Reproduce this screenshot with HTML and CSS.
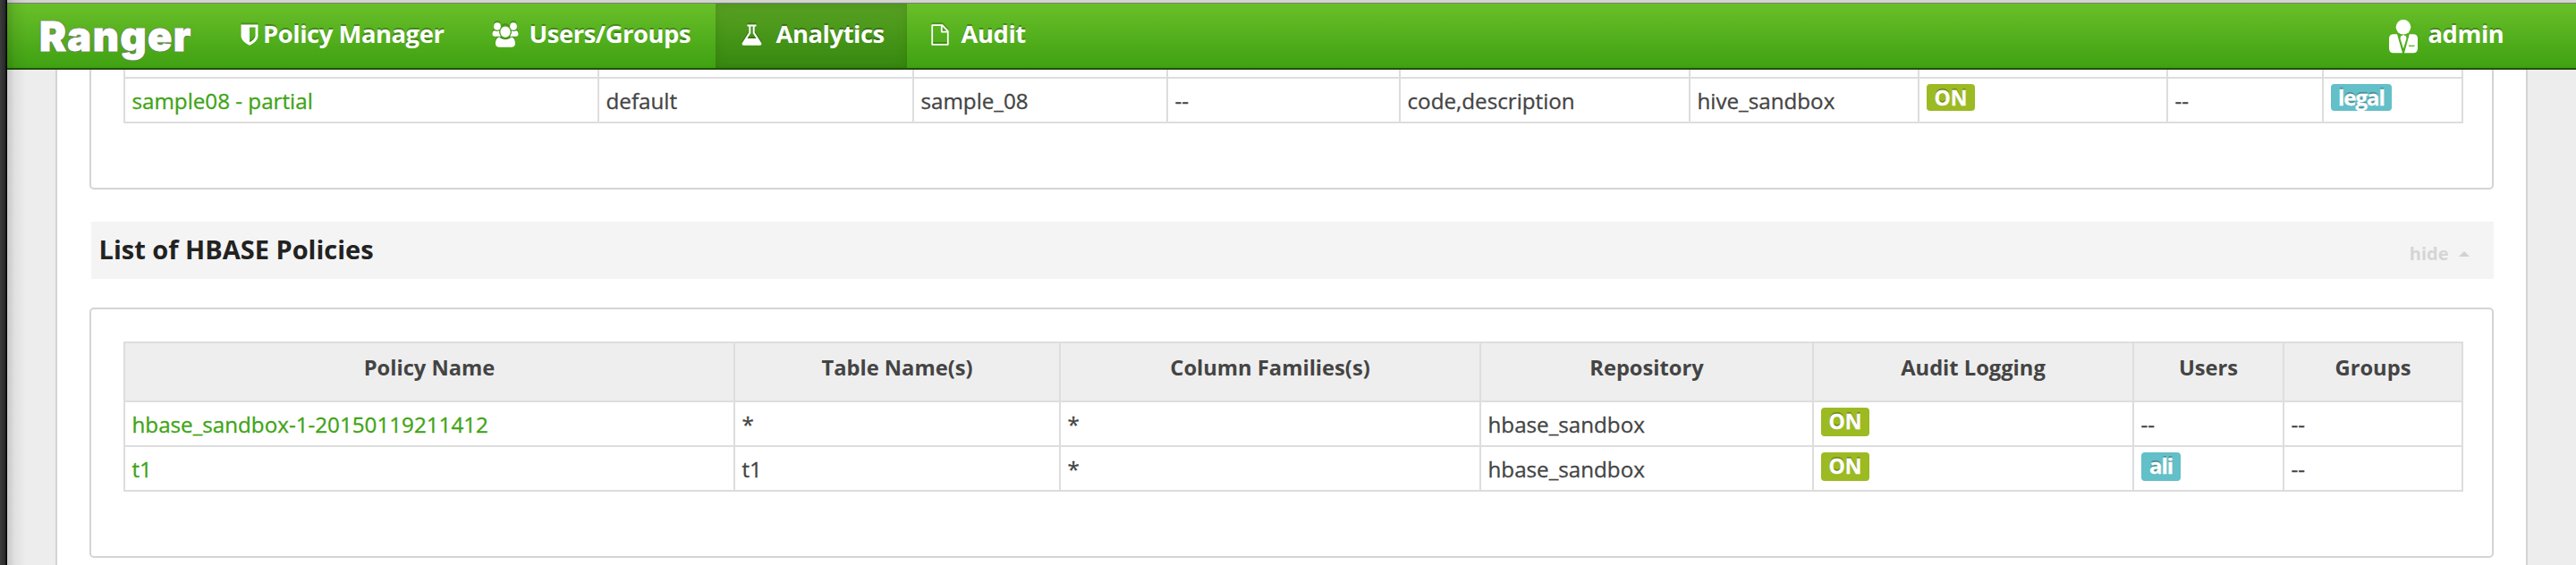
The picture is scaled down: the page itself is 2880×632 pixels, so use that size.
FILE: index.html
```html
<!DOCTYPE html>
<html lang="en">
<head>
<meta charset="utf-8">
<title>Ranger</title>
<link rel="stylesheet" href="styles.css">
</head>
<body>
<div class="screen">
  <div class="edge"></div>
  <div class="window">
    <div class="topline"></div>
    <header class="navbar">
      <a class="brand">Ranger</a>
      <nav class="nav">
        <a class="item policy">
          <svg class="icon" width="20" height="24" viewBox="0 0 20 24"><path fill="#fff" fill-rule="evenodd" d="M0.5 0.5h19v12.5c0 4.500-4.500 8.500-9.500 10.700C5 21.500.5 17.500.5 13zM10 3.500v16.800c3.800-2 6.500-4.800 6.500-7.600V3.500z"/></svg>
          <span>Policy Manager</span>
        </a>
        <a class="item users">
          <svg class="icon" width="30" height="28" viewBox="0 0 30 28"><g fill="#fff"><ellipse cx="6" cy="4.500" rx="3.900" ry="4.300"/><ellipse cx="24" cy="4.500" rx="3.900" ry="4.300"/><path d="M3 9.200c1.500.9 3.500 1 5 .3.200 2.500 1 4.700 2 6.300H3.500C1.500 15.800.5 14.800.5 13c0-1.900.8-3.800 2.500-3.800zM27 9.200c-1.500.9-3.500 1-5 .3-.2 2.500-1 4.700-2 6.300h6.500c2 0 3-1 3-2.800 0-1.900-.8-3.800-2.500-3.800z"/></g><ellipse cx="15" cy="10.600" rx="6.200" ry="6.700" fill="#fff" stroke="#4fa81c" stroke-width="1.200"/><path fill="#fff" d="M8.500 16.500c1.700 1.800 4 2.700 6.500 2.700s4.800-.9 6.500-2.700c3.200.3 4.500 3.700 4.500 7.200 0 2.700-1.700 4.100-4.500 4.100h-13C5.700 27.800 4 26.400 4 23.700c0-3.500 1.300-6.900 4.500-7.200z"/></svg>
          <span>Users/Groups</span>
        </a>
        <a class="item analytics active">
          <svg class="icon" width="23" height="24" viewBox="0 0 23 24"><path fill="#fff" fill-rule="evenodd" d="M6.500.5h10v2h-1.800v6.800l7.300 11.500c1 1.700.3 2.900-1.600 2.900H2.600C.7 23.700 0 22.500 1 20.800L8.300 9.300V2.500H6.500zM10.300 2.500v7.400L6.500 16h10L12.700 9.900V2.500z"/></svg>
          <span>Analytics</span>
        </a>
        <a class="item audit">
          <svg class="icon" width="20" height="24" viewBox="0 0 20 24"><path fill="none" stroke="#fff" stroke-width="1.800" stroke-linejoin="round" d="M1.200 1.200h11.300l6.300 6.600v15H1.200zM11.800 1.200v7.400h7"/></svg>
          <span>Audit</span>
        </a>
      </nav>
      <a class="account">
        <svg width="32" height="38" viewBox="0 0 32 38"><g fill="#fff"><circle cx="16" cy="8.300" r="8.300"/><path d="M5 16.200h4L15 37.200H5q-5 0-5-5V21.200q0-5 5-5zM27 16.200h-4.200L17 37.200h10q5 0 5-5V21.200q0-5-5-5z"/><path d="M13 18.500l3-1.500 3 1.500.5 2.500L16 32.500 12.500 21z"/></g><path stroke="#56b01f" stroke-width="1.300" d="M22 29.300h6.500"/></svg>
        <span>admin</span>
      </a>
    </header>
    <main class="content">
      <section class="panel hive">
        <table class="grid">
          <colgroup><col class="w530"><col class="w352"><col class="w284"><col class="w260"><col class="w324"><col class="w256"><col class="w278"><col class="w174"><col class="w156"></colgroup>
          <tbody>
            <tr class="cut"><td></td><td></td><td></td><td></td><td></td><td></td><td></td><td></td><td></td></tr>
            <tr><td><a class="link">sample08 - partial</a></td><td>default</td><td>sample_08</td><td>--</td><td>code,description</td><td>hive_sandbox</td><td class="tag"><span class="label on">ON</span></td><td>--</td><td class="tag"><span class="label info legal">legal</span></td></tr>
          </tbody>
        </table>
      </section>
      <div class="heading">
        <h3>List of HBASE Policies</h3>
        <a class="hide">hide <i class="caret"></i></a>
      </div>
      <section class="panel hbase">
        <table class="grid headed">
          <colgroup><col class="w682"><col class="w364"><col class="w470"><col class="w372"><col class="w358"><col class="w168"><col class="w200"></colgroup>
          <thead><tr><th>Policy Name</th><th>Table Name(s)</th><th>Column Families(s)</th><th>Repository</th><th>Audit Logging</th><th>Users</th><th>Groups</th></tr></thead>
          <tbody>
            <tr><td><a class="link">hbase_sandbox-1-20150119211412</a></td><td>*</td><td>*</td><td>hbase_sandbox</td><td class="tag"><span class="label on">ON</span></td><td>--</td><td>--</td></tr>
            <tr><td><a class="link">t1</a></td><td>t1</td><td>*</td><td>hbase_sandbox</td><td class="tag"><span class="label on">ON</span></td><td class="tag"><span class="label info ali">ali</span></td><td>--</td></tr>
          </tbody>
        </table>
      </section>
    </main>
    <div class="shade"></div>
  </div>
</div>
</body>
</html>
```
FILE: styles.css
```css
* { box-sizing: border-box; }
body { margin: 0; overflow: hidden; font-family: "Open Sans", sans-serif; font-size: 24.2px; color: #444; }
.screen { display: flex; width: 2880px; height: 632px; overflow: hidden; }
.edge { width: 8px; background: linear-gradient(90deg, #3c3c3c, #2a2a2a 70%, #000 90%); }
.window { position: relative; flex: 1; display: flex; flex-direction: column; background: #ededed; }
.shade { position: absolute; left: 0; top: 0; width: 22px; height: 100%; background: linear-gradient(90deg, rgba(0,0,0,.16), rgba(0,0,0,.05) 40%, rgba(0,0,0,0)); }
.topline { height: 4px; background: #d4d4d4; border-bottom: 1px solid #7b7f78; }

.navbar { display: flex; height: 74px; background: linear-gradient(#69bf29, #3fa112); border-bottom: 2px solid #205006; color: #fff; font-size: 27.4px; font-weight: 700; letter-spacing: -.45px; line-height: 67px; text-shadow: 0 -2px 0 rgba(0,0,0,.25); }
.brand { width: 233px; padding-left: 36px; font: 900 45px/74px Inter, sans-serif; letter-spacing: 1.5px; -webkit-text-stroke: .8px #fff; text-shadow: 1px 0 1px #777, -1px 0 1px #777, 0 1px 1px #777, 0 -1px 1px #777; }
.nav { display: flex; flex: 1; }
.item { display: flex; align-items: flex-start; white-space: nowrap; }
.icon { flex: none; margin-top: 22.5px; filter: drop-shadow(0 -2px 0 rgba(0,0,0,.2)); }
.policy { width: 281px; padding-left: 28px; gap: 5px; }
.users { width: 278px; padding-left: 27.5px; gap: 12px; }
.users .icon { margin-top: 20.5px; }
.analytics { width: 214px; padding-left: 29px; gap: 15.5px; }
.audit { padding-left: 27px; gap: 13.5px; }
.active { background: rgba(0,0,0,.15); box-shadow: inset 0 6px 16px rgba(0,0,0,.05), inset 0 0 6px rgba(0,0,0,.06); }
.account { display: flex; align-items: flex-start; gap: 11.5px; width: 209px; }
.account svg { margin-top: 17.5px; }

.content { width: 2764px; margin-left: 54px; padding: 0 36px; flex: 1; background: #fff; border: solid #d4d4d4; border-width: 0 2px; }
.panel { width: 2688px; padding: 0 32px 0 36px; border: 2px solid #d4d4d4; }
.hive { height: 134px; border-top: 0; border-radius: 0 0 5px 5px; }
.hbase { height: 280px; margin-top: 32px; padding-top: 36px; border-radius: 5px; }

.heading { display: flex; align-items: flex-start; justify-content: space-between; width: 2686px; height: 64px; margin: 36px 0 0 2px; padding: 0 27px 0 7.500px; background: #f4f4f4; }
.heading h3 { margin: 0; padding-left: 1px; font-size: 29px; font-weight: 700; line-height: 62px; color: #222; }
.hide { display: flex; align-items: flex-start; gap: 11.500px; font-size: 20px; font-weight: 700; line-height: 72px; color: #d5d5d5; }
.caret { margin-top: 33px; border: 6px solid transparent; border-top: 0; border-bottom-color: #d2d2d2; }

.grid { width: 2616px; table-layout: fixed; border-collapse: separate; border-spacing: 0; border-right: 2px solid #ddd; }
.grid td, .grid th { border: solid #ddd; border-width: 0 0 2px 2px; }
.grid td { height: 50px; padding: 1px 0 0 7.500px; line-height: 47px; vertical-align: top; white-space: nowrap; -webkit-text-stroke: .3px currentColor; }
.grid .cut td { height: 10px; padding: 0; line-height: 0; }
.grid .tag { padding: 6px 0 0 8px; line-height: 30px; }
.grid th { height: 66px; padding: 0 0 10px; background: #eee; font-size: 23.700px; line-height: 54px; font-weight: 700; text-align: center; }
.headed { border-top: 2px solid #ddd; }
.link { color: #3fa416; }
.label { display: block; width: 54px; height: 30px; border-radius: 4px; font-size: 23px; font-weight: 700; line-height: 30px; text-align: center; color: #fff; text-shadow: 0 -2px 0 rgba(0,0,0,.25); }
.hbase .label { height: 32px; }
.on { background: #9cba22; }
.info { background: #63bfc8; }
.legal { width: 68px; font-size: 24px; letter-spacing: -1px; }
.ali { width: 44px; font-size: 24px; letter-spacing: -1px; }

.w530 { width: 530px; } .w352 { width: 352px; } .w284 { width: 284px; }
.w260 { width: 260px; } .w324 { width: 324px; } .w256 { width: 256px; }
.w278 { width: 278px; } .w174 { width: 174px; } .w156 { width: 156px; }
.w682 { width: 682px; } .w364 { width: 364px; } .w470 { width: 470px; }
.w372 { width: 372px; } .w358 { width: 358px; } .w168 { width: 168px; }
.w200 { width: 200px; }
```
